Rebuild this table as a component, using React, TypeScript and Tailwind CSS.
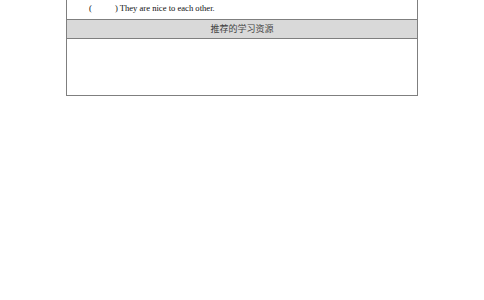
export default function App() {
  return (
    <div className="w-[484px] h-[300px] bg-white" style={{ fontFamily: '"Liberation Serif", "Noto Sans CJK SC", serif' }}>
      <div className="ml-[66px] w-[352px] border-x border-b border-[#7f7f7f]">
        {/* question row, cut at top */}
        <div className="h-[20px] border-b border-[#7f7f7f] flex items-end pb-[6px] pl-[22px] text-[8.6px] leading-none text-[#111]">
          <span>(</span>
          <span className="ml-[23px]">) They are nice to each other.</span>
        </div>
        <div className="h-[19px] bg-[#d9d9d9] border-b border-[#7f7f7f] flex items-center justify-center pt-[2px] text-[9px] text-[#444]">
          推荐的学习资源
        </div>
        <div className="h-[56px]" />
      </div>
    </div>
  )
}
